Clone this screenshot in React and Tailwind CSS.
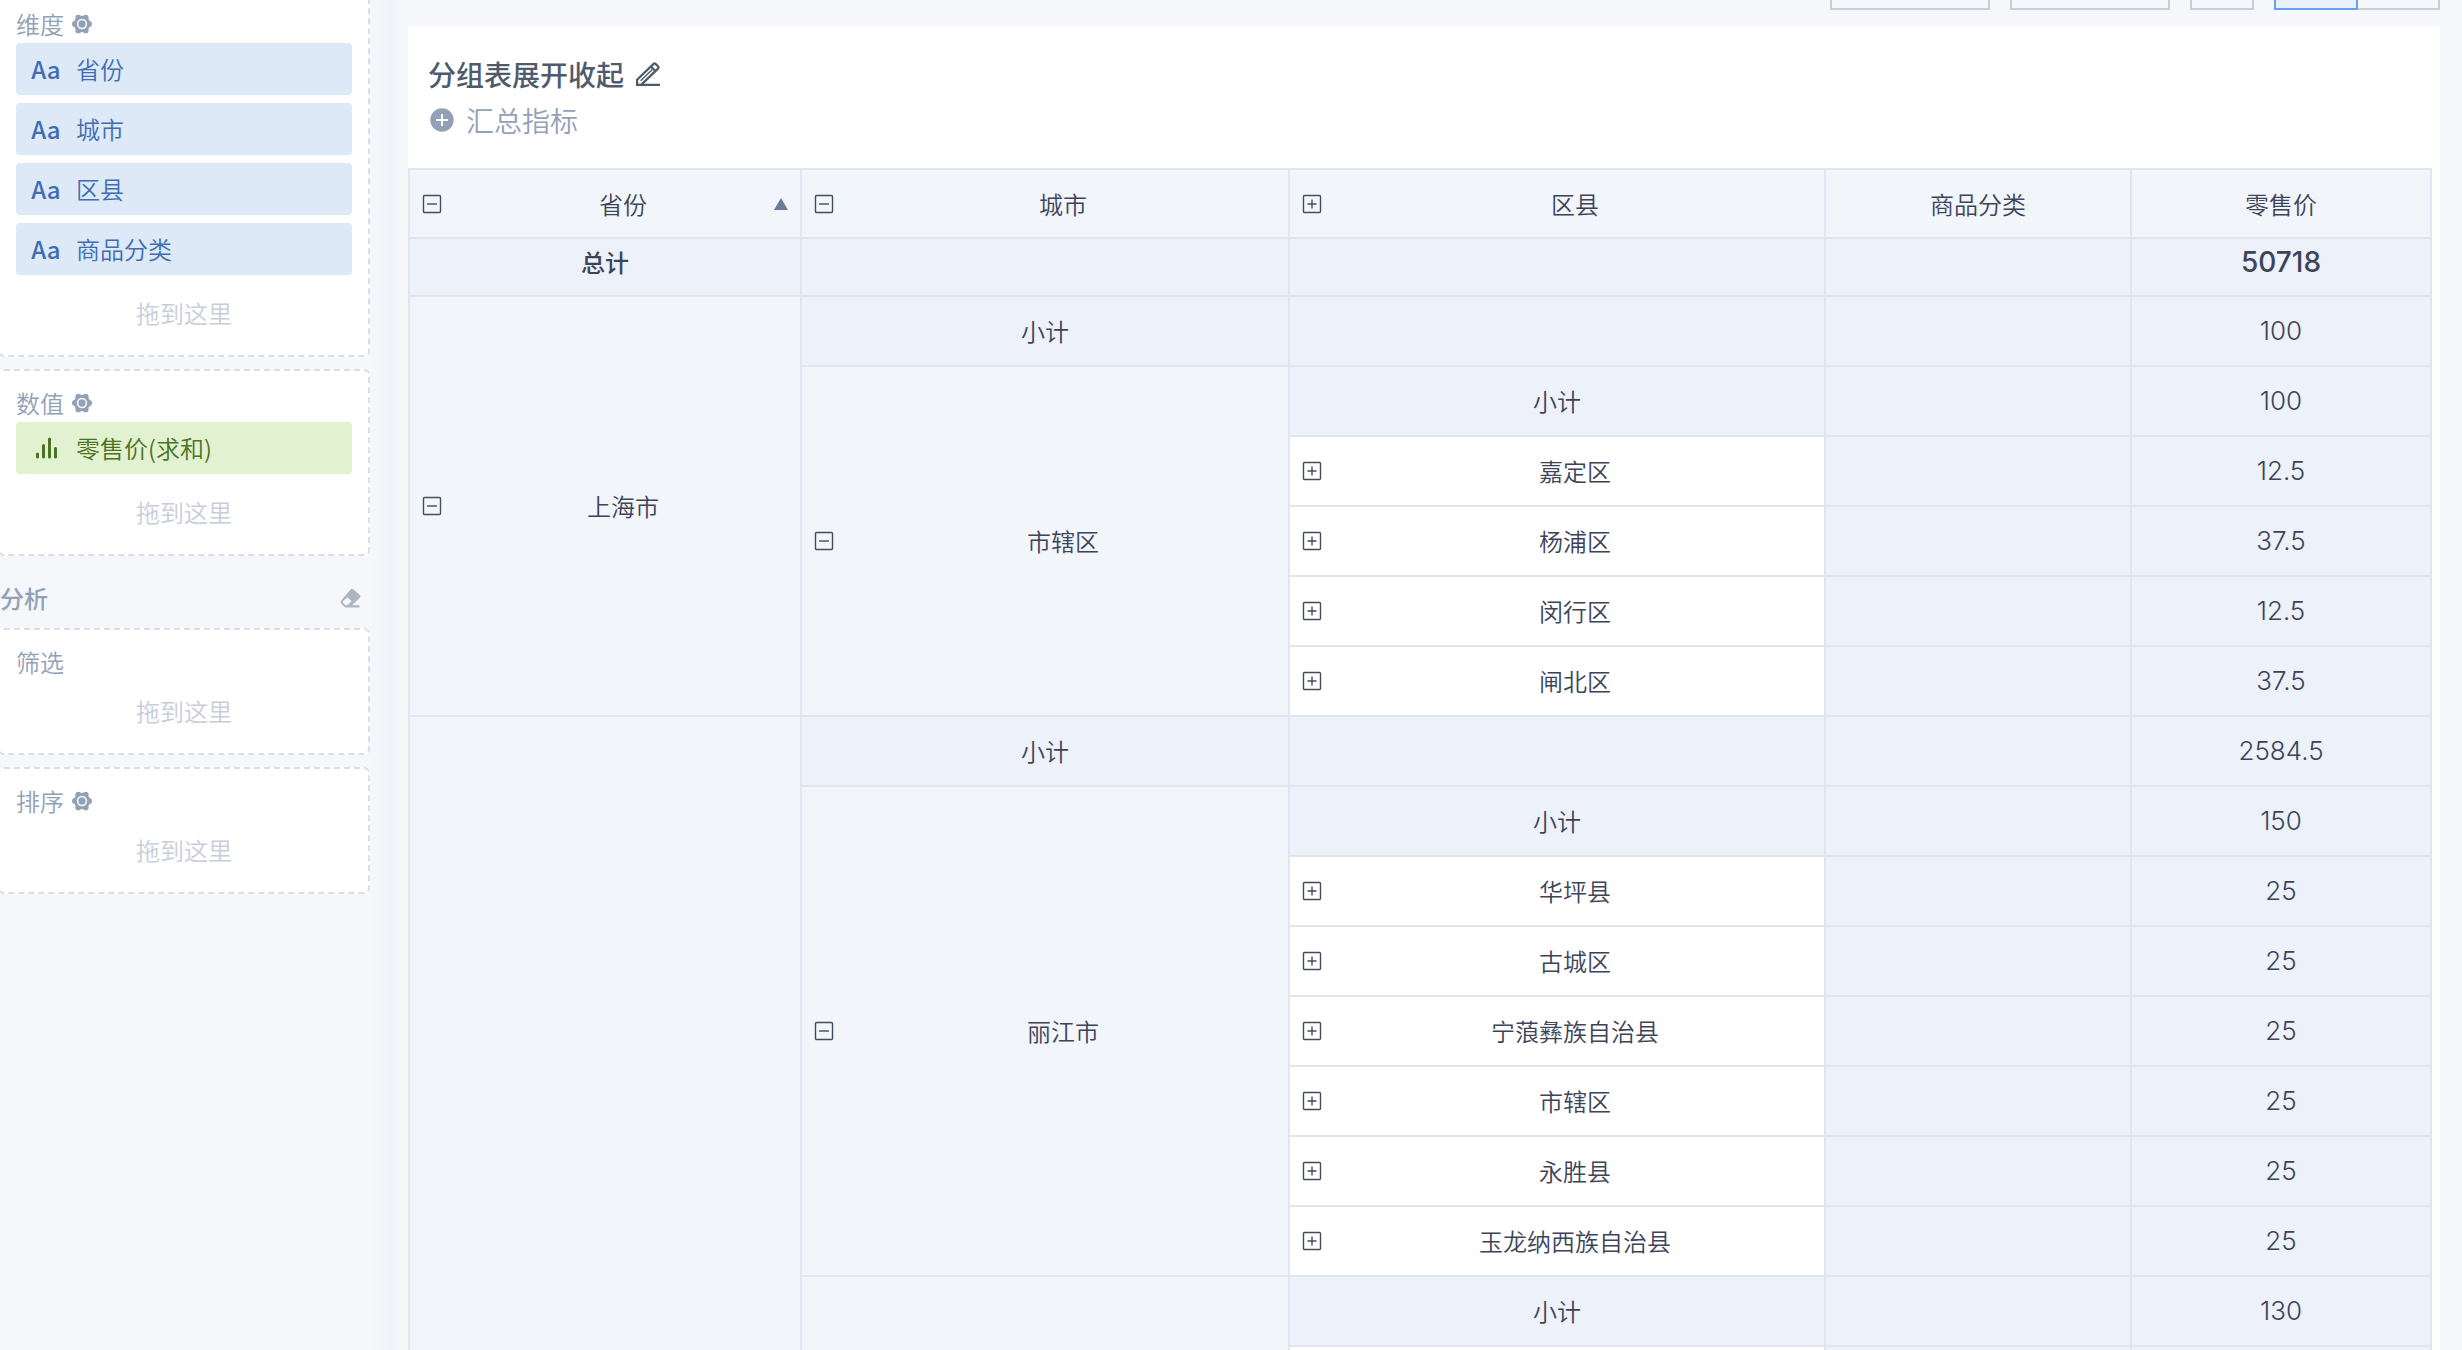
import clsx from "clsx";

const dimensions = ["省份", "城市", "区县", "商品分类"];

// one entry per table row, cells in column order; spanned columns are left out
const rows = [
  [
    { text: "上海市", kind: "group", span: 6, toggle: "minus" },
    { text: "小计", kind: "sub" },
    { kind: "sub" },
    { kind: "sub" },
    { text: "100", kind: "value" },
  ],
  [
    { text: "市辖区", kind: "group", span: 5, toggle: "minus" },
    { text: "小计", kind: "sub" },
    { kind: "sub" },
    { text: "100", kind: "value" },
  ],
  district("嘉定区", "12.5"),
  district("杨浦区", "37.5"),
  district("闵行区", "12.5"),
  district("闸北区", "37.5"),
  [
    { kind: "group", span: 10 },
    { text: "小计", kind: "sub" },
    { kind: "sub" },
    { kind: "sub" },
    { text: "2584.5", kind: "value" },
  ],
  [
    { text: "丽江市", kind: "group", span: 7, toggle: "minus" },
    { text: "小计", kind: "sub" },
    { kind: "sub" },
    { text: "150", kind: "value" },
  ],
  district("华坪县", "25"),
  district("古城区", "25"),
  district("宁蒗彝族自治县", "25"),
  district("市辖区", "25"),
  district("永胜县", "25"),
  district("玉龙纳西族自治县", "25"),
  [
    { kind: "group", span: 2 },
    { text: "小计", kind: "sub" },
    { kind: "sub" },
    { text: "130", kind: "value" },
  ],
  [{ kind: "leaf" }, { kind: "sub" }, { kind: "value" }],
];

function district(name, price) {
  return [
    { text: name, kind: "leaf", toggle: "plus" },
    { kind: "sub" },
    { text: price, kind: "value" },
  ];
}

const GearIcon = () => (
  <svg viewBox="0 0 20 20" className="h-5 w-5" aria-hidden="true">
    <g fill="#92a1b6">
      <circle cx="10" cy="10" r="8.2" />
      <circle cx="2.9" cy="10" r="2.9" />
      <circle cx="17.1" cy="10" r="2.9" />
      <circle cx="6.3" cy="3.6" r="2.9" />
      <circle cx="13.7" cy="3.6" r="2.9" />
      <circle cx="6.3" cy="16.4" r="2.9" />
      <circle cx="13.7" cy="16.4" r="2.9" />
    </g>
    <circle cx="10" cy="10" r="4.4" fill="none" stroke="#fff" strokeWidth="1.5" />
  </svg>
);

const BarsIcon = () => (
  <svg viewBox="0 0 28 24" className="h-6 w-7" aria-hidden="true">
    <g stroke="#4a7324" strokeWidth="3" strokeLinecap="round">
      <path d="M5.5 18v3M11.5 9.5V21M17.5 3v18M23.5 12.5V21" />
    </g>
  </svg>
);

const EraserIcon = () => (
  <svg viewBox="0 0 22 20" className="h-5 w-[22px]" aria-hidden="true">
    <path
      d="M10.8 1.2Q12 0.2 13.2 1.2L20 7.2Q21.2 8.3 20 9.6L12.2 17.3H19.5V19.4H6.4Q5 19.4 4 18.4L1.2 15.4Q0 14 1.2 12.4ZM7.4 9.4L2.9 13.2Q2.3 14 2.9 14.6L5.4 16.9Q6.4 17.6 7.6 16.9L11.6 13Z"
      fill="#adb5bf"
      fillRule="evenodd"
    />
  </svg>
);

const PencilIcon = () => (
  <svg viewBox="0 0 24 24" className="h-6 w-6" aria-hidden="true">
    <g fill="none" stroke="#4f5b6d" strokeWidth="2.2">
      <path d="M1.1 23v-5.4L17.6 1.9Q18.6 1 19.6 1.9L22.2 4.4Q23 5.4 22.2 6.4L5.4 22.6" />
      <path d="M0 22.9h24M15 4.6l4.6 4.6" />
      <path d="M4.6 18.8L16.4 7.4" strokeWidth="1.4" />
    </g>
  </svg>
);

const AddIcon = () => (
  <svg viewBox="0 0 24 24" className="h-6 w-6" aria-hidden="true">
    <circle cx="12" cy="12" r="11.7" fill="#92a1b6" />
    <path d="M12 6v12M6 12h12" stroke="#fff" strokeWidth="2" />
  </svg>
);

const ToggleButton = ({ type }) => (
  <button
    type="button"
    aria-label={type === "plus" ? "展开" : "收起"}
    className="shrink-0 pr-1 pl-3"
  >
    <svg viewBox="0 0 20 20" className="h-5 w-5" fill="none" stroke="#454b5e">
      <rect x="1.5" y="1.5" width="17" height="17" rx="1" strokeWidth="1.4" />
      <path
        d={type === "plus" ? "M5.5 10h9M10 5.5v9" : "M5 10h10"}
        strokeWidth="1.4"
      />
    </svg>
  </button>
);

const Panel = ({ title, gear, children }) => (
  <section className="rounded-md border-2 border-dashed border-[#dcdee7] bg-white px-4 pt-[14px] pb-3">
    <div className="mb-px flex h-9 items-center gap-2 text-[#92a1b6]">
      <h3 className="font-[350]">{title}</h3>
      {gear && (
        <button type="button" aria-label={`${title}设置`}>
          <GearIcon />
        </button>
      )}
    </div>
    {children}
    <p className="flex h-[60px] items-center justify-center font-[350] text-[#c9cdd9]">
      拖到这里
    </p>
  </section>
);

const Chip = ({ icon, label, green }) => (
  <div
    className={clsx(
      "mb-2 flex h-[52px] items-center gap-4 rounded px-4 font-[350]",
      green ? "bg-[#e2f1cf] text-[#4a7324]" : "bg-[#dde9f7] text-[#3f6cb5]"
    )}
  >
    <span className="flex w-7 shrink-0 justify-center">{icon}</span>
    <span>{label}</span>
  </div>
);

const Sidebar = () => (
  <aside className="-mt-[10px] -ml-[2px] w-[390px] shrink-0 bg-linear-to-r from-[#f5f7fb] from-95% to-[#f2f4f8] pr-[18px]">
    <div className="flex flex-col gap-3">
      <Panel title="维度" gear>
        {dimensions.map((name) => (
          <Chip
            key={name}
            label={name}
            icon={<span className="font-medium">Aa</span>}
          />
        ))}
      </Panel>
      <Panel title="数值" gear>
        <Chip green label="零售价(求和)" icon={<BarsIcon />} />
      </Panel>
    </div>
    <div className="flex h-[72px] items-center justify-between pt-3 pr-2 pl-0.5">
      <h2 className="font-medium text-[#92a1b6]">分析</h2>
      <button type="button" aria-label="清空">
        <EraserIcon />
      </button>
    </div>
    <div className="flex flex-col gap-3">
      <Panel title="筛选" />
      <Panel title="排序" gear />
    </div>
  </aside>
);

const Toolbar = () => (
  <div className="flex h-[10px] items-end justify-end gap-5 overflow-hidden">
    <button type="button" aria-label="保存" className="h-12 w-40 shrink-0 border-2 border-[#c8cdd9]" />
    <button type="button" aria-label="导出" className="h-12 w-40 shrink-0 border-2 border-[#c8cdd9]" />
    <button type="button" aria-label="更多" className="h-12 w-16 shrink-0 border-2 border-[#c8cdd9]" />
    <div className="flex shrink-0">
      <button type="button" aria-label="表格" className="h-12 w-[84px] border-2 border-[#66a0f4] bg-[#ebf1fc]" />
      <button type="button" aria-label="图表" className="h-12 w-[82px] border-2 border-l-0 border-[#c8cdd9]" />
    </div>
  </div>
);

const HeaderCell = ({ label, toggle, sorted }) => (
  <th scope="col" className="border-2 border-[#e2e5ef] p-0 font-[350]">
    <div className="relative flex items-center">
      {toggle && <ToggleButton type={toggle} />}
      <span className="flex-1 text-center">{label}</span>
      {sorted && (
        <svg viewBox="0 0 14 12" className="absolute right-3 h-3 w-3.5" aria-hidden="true">
          <path d="M7 0l7 12H0z" fill="#6b7a99" />
        </svg>
      )}
    </div>
  </th>
);

const BodyCell = ({ cell }) => (
  <td
    rowSpan={cell.span}
    className={clsx(
      "border-2 border-[#e2e5ef] p-0",
      cell.kind === "group" && "bg-[#f2f5fa]",
      cell.kind === "leaf" && "bg-white",
      (cell.kind === "sub" || cell.kind === "value") && "bg-[#ecf1fa]",
      cell.kind === "value" && "font-['Inter'] text-[26px]"
    )}
  >
    <div className="flex items-center">
      {cell.toggle && <ToggleButton type={cell.toggle} />}
      <span className="flex-1 text-center">{cell.text}</span>
    </div>
  </td>
);

const PivotTable = () => (
  <table className="w-full table-fixed border-collapse font-[350] text-[#3d4459]">
    <colgroup>
      <col className="w-[392px]" />
      <col className="w-[488px]" />
      <col className="w-[536px]" />
      <col className="w-[306px]" />
      <col className="w-[300px]" />
    </colgroup>
    <thead>
      <tr className="h-[69px] bg-[#f2f5fa]">
        <HeaderCell label="省份" toggle="minus" sorted />
        <HeaderCell label="城市" toggle="minus" />
        <HeaderCell label="区县" toggle="plus" />
        <HeaderCell label="商品分类" />
        <HeaderCell label="零售价" />
      </tr>
    </thead>
    <tbody>
      <tr className="h-[58px] bg-[#ecf1fa] font-medium">
        <td className="border-2 border-[#e2e5ef] p-0 pb-2.5 text-center leading-8">总计</td>
        <td className="border-2 border-[#e2e5ef]" />
        <td className="border-2 border-[#e2e5ef]" />
        <td className="border-2 border-[#e2e5ef]" />
        <td className="border-2 border-[#e2e5ef] p-0 pb-2.5 text-center font-['Inter'] text-[28px] leading-8">
          50718
        </td>
      </tr>
      {rows.map((cells, i) => (
        <tr key={i} className="h-[70px]">
          {cells.map((cell, j) => (
            <BodyCell key={j} cell={cell} />
          ))}
        </tr>
      ))}
    </tbody>
  </table>
);

export default function App() {
  return (
    <div className="flex h-screen overflow-hidden bg-[#f5f7fb] font-['Noto_Sans_CJK_SC',sans-serif] text-[24px] leading-9">
      <Sidebar />
      <div className="w-3 shrink-0 bg-linear-to-r from-[#eff2f6] to-[#f5f7fb]" />
      <main className="min-w-0 flex-1 pr-[22px] pl-2">
        <Toolbar />
        <div className="mt-4 bg-white pt-6 pr-2">
          <div className="flex h-12 items-center gap-3 pl-5 text-[28px]">
            <h1 className="font-medium text-[#4f5b6d]">分组表展开收起</h1>
            <button type="button" aria-label="编辑标题">
              <PencilIcon />
            </button>
          </div>
          <button
            type="button"
            className="mb-[26px] flex h-11 items-center gap-3 pl-[22px] text-[28px] font-[350] text-[#92a1b6]"
          >
            <AddIcon />
            汇总指标
          </button>
          <PivotTable />
        </div>
      </main>
    </div>
  );
}
